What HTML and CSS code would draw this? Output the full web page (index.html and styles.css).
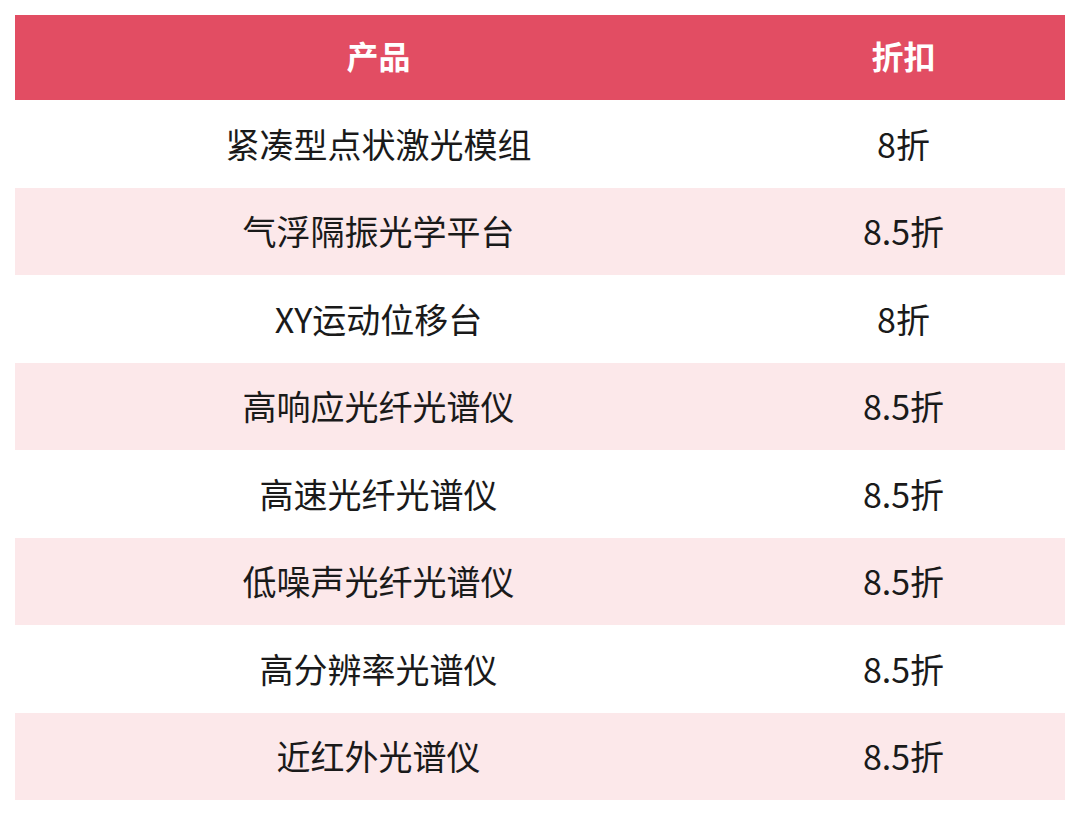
FILE: index.html
```html
<!DOCTYPE html>
<html lang="zh">
<head>
<meta charset="utf-8">
<link rel="stylesheet" href="styles.css">
</head>
<body>
<div class="table">
  <div class="row head"><div class="c1">产品</div><div class="c2">折扣</div></div>
  <div class="row"><div class="c1">紧凑型点状激光模组</div><div class="c2">8折</div></div>
  <div class="row alt"><div class="c1">气浮隔振光学平台</div><div class="c2">8.5折</div></div>
  <div class="row"><div class="c1">XY运动位移台</div><div class="c2">8折</div></div>
  <div class="row alt"><div class="c1">高响应光纤光谱仪</div><div class="c2">8.5折</div></div>
  <div class="row"><div class="c1">高速光纤光谱仪</div><div class="c2">8.5折</div></div>
  <div class="row alt"><div class="c1">低噪声光纤光谱仪</div><div class="c2">8.5折</div></div>
  <div class="row"><div class="c1">高分辨率光谱仪</div><div class="c2">8.5折</div></div>
  <div class="row alt"><div class="c1">近红外光谱仪</div><div class="c2">8.5折</div></div>
</div>
</body>
</html>
```
FILE: styles.css
```css
html, body { margin: 0; padding: 0; background: #ffffff; }
body { width: 1080px; height: 817px; overflow: hidden; }
.table {
  margin: 15px 15px 0 15px;
  width: 1050px;
  display: flex;
  flex-direction: column;
  font-family: "Noto Sans CJK SC", "Noto Sans", sans-serif;
  color: #1a1a1a;
  font-size: 34px;
}
.row {
  display: grid;
  grid-template-columns: 727px 323px;
  height: 87.5px;
  align-items: center;
}
.row > div { text-align: center; line-height: 1; }
.head {
  height: 85px;
  box-sizing: border-box;
  padding-bottom: 6px;
  background: #e24d63;
  color: #ffffff;
  font-weight: 700;
  font-size: 32px;
}
.alt { background: #fce8ea; }
```
